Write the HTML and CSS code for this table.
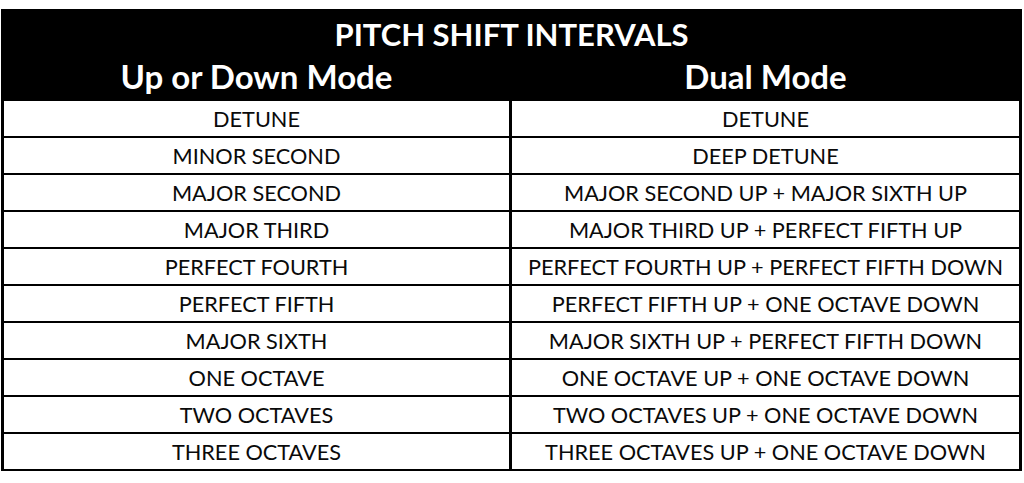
FILE: index.html
```html
<!DOCTYPE html>
<html>
<head>
<meta charset="utf-8">
<link rel="stylesheet" href="styles.css">
</head>
<body>
<div class="sheet">
<table class="intervals">
  <colgroup><col class="col-left"><col class="col-right"></colgroup>
  <thead>
    <tr><th class="title" colspan="2">PITCH SHIFT INTERVALS</th></tr>
    <tr><th class="mode">Up or Down Mode</th><th class="mode">Dual Mode</th></tr>
  </thead>
  <tbody>
    <tr><td>DETUNE</td><td>DETUNE</td></tr>
    <tr><td>MINOR SECOND</td><td>DEEP DETUNE</td></tr>
    <tr><td>MAJOR SECOND</td><td>MAJOR SECOND UP + MAJOR SIXTH UP</td></tr>
    <tr><td>MAJOR THIRD</td><td>MAJOR THIRD UP + PERFECT FIFTH UP</td></tr>
    <tr><td>PERFECT FOURTH</td><td>PERFECT FOURTH UP + PERFECT FIFTH DOWN</td></tr>
    <tr><td>PERFECT FIFTH</td><td>PERFECT FIFTH UP + ONE OCTAVE DOWN</td></tr>
    <tr><td>MAJOR SIXTH</td><td>MAJOR SIXTH UP + PERFECT FIFTH DOWN</td></tr>
    <tr><td>ONE OCTAVE</td><td>ONE OCTAVE UP + ONE OCTAVE DOWN</td></tr>
    <tr><td>TWO OCTAVES</td><td>TWO OCTAVES UP + ONE OCTAVE DOWN</td></tr>
    <tr><td>THREE OCTAVES</td><td>THREE OCTAVES UP + ONE OCTAVE DOWN</td></tr>
  </tbody>
</table>
</div>
</body>
</html>
```
FILE: styles.css
```css
html, body {
  margin: 0;
  padding: 0;
  background: #fff;
}
.sheet {
  padding: 9px 2px 0 1px;
}
.intervals {
  width: 1021px;
  border-collapse: collapse;
  table-layout: fixed;
  font-family: Lato, "Open Sans", sans-serif;
}
.col-left {
  width: 508px;
}
.intervals th {
  background: #000;
  color: #fff;
  font-weight: 700;
  padding: 0;
  border-left: 3px solid #000;
  border-right: 3px solid #000;
}
.intervals .title {
  height: 46px;
  font-size: 31px;
  line-height: 46px;
  vertical-align: top;
  border-top: 2px solid #000;
}
.intervals .mode {
  height: 42px;
  font-size: 33px;
  vertical-align: top;
  line-height: 38px;
}
.intervals td {
  height: 35px;
  padding: 0;
  text-align: center;
  vertical-align: middle;
  font-size: 21.7px;
  color: #0a0a0a;
  border-top: 2px solid #000;
  border-bottom: 2px solid #000;
  border-left: 3px solid #000;
  border-right: 3px solid #000;
}
```
